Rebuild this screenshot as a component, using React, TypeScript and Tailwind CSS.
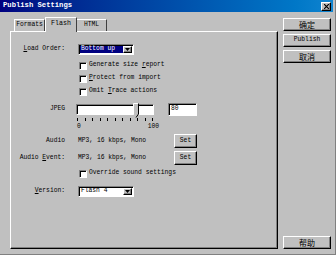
const mono = "font-['Liberation_Mono','DejaVu_Sans_Mono',monospace]";
const cjk = "font-['Noto_Sans_CJK_SC','Noto_Sans',sans-serif]";
const raised =
  "border border-t-white border-l-white border-b-black border-r-black shadow-[inset_-1px_-1px_0_#808080]";
const sunken =
  "border border-t-[#808080] border-l-[#808080] border-b-white border-r-white shadow-[inset_1px_1px_0_#000]";

const U = ({ children }: { children: string }) => <span className="underline underline-offset-[1px]">{children}</span>;

const Select = ({ value, selected }: { value: string; selected?: boolean }) => (
  <div className={`w-[56px] h-[11px] bg-white ${sunken} flex items-stretch p-[1px]`}>
    <span
      className={`flex-1 flex items-center pl-[1px] leading-none ${
        selected ? "bg-[#000080] text-white" : "text-black"
      }`}
    >
      {value}
    </span>
    <span className={`w-[9px] bg-[#c0c0c0] ${raised} flex items-center justify-center`}>
      <svg width="5" height="3" viewBox="0 0 5 3">
        <path d="M0 0H5L2.5 3Z" fill="#000" />
      </svg>
    </span>
  </div>
);

const Check = ({ children }: { children: React.ReactNode }) => (
  <div className="flex items-center h-[13px] ml-[1px]">
    <span className={`w-[8px] h-[8px] bg-white ${sunken}`} />
    <span className="ml-[2px] leading-none">{children}</span>
  </div>
);

const Label = ({ children }: { children: React.ReactNode }) => (
  <span className="w-[54px] shrink-0 text-right leading-none">{children}</span>
);

const WinButton = ({ children, className = "" }: { children: React.ReactNode; className?: string }) => (
  <div className={`h-[13px] bg-[#c0c0c0] ${raised} flex items-center justify-center leading-none ${className}`}>
    {children}
  </div>
);

export default function App() {
  return (
    <div className={`w-[336px] h-[255px] bg-[#c0c0c0] text-black ${mono} text-[6.3px] overflow-hidden border-r border-b border-r-[#808080] border-b-[#808080]`}>
      {/* title bar */}
      <div className="h-[12px] mr-[2px] flex items-center justify-between pl-[3px] pr-[2px] bg-gradient-to-r from-[#000080] to-[#1084d0]">
        <span className="text-white font-bold text-[7.2px] leading-none">Publish Settings</span>
        <span className={`w-[10px] h-[9px] bg-[#c0c0c0] ${raised} flex items-center justify-center`}>
          <svg width="5" height="5" viewBox="0 0 5 5">
            <path d="M0 0L5 5M5 0L0 5" stroke="#000" strokeWidth="1.2" />
          </svg>
        </span>
      </div>

      <div className="flex pt-[5px]">
        {/* left: tabs + panel */}
        <div className="ml-[10px] w-[268px] flex flex-col">
          <div className="h-[14px] flex items-end pl-[4px]">
            <div className="w-[31px] h-[12px] border-t border-l border-white border-r border-r-[#404040] flex items-center justify-center leading-none">
              Formats
            </div>
            <div className="relative z-10 -mb-[1px] w-[32px] h-[15px] bg-[#c0c0c0] border-t border-l border-white border-r border-r-[#404040] flex items-start pt-[3px] justify-center leading-none text-[6.6px]">
              Flash
            </div>
            <div className="w-[30px] h-[12px] border-t border-white border-r border-r-[#404040] flex items-center justify-center leading-none">
              HTML
            </div>
          </div>

          <div className="h-[218px] border border-t-white border-l-white border-r-black border-b-black shadow-[inset_-1px_-1px_0_#808080] flex flex-col">
            {/* load order */}
            <div className="flex items-center h-[11px] mt-[12px]">
              <Label>
                <U>L</U>oad Order:
              </Label>
              <div className="ml-[13px]">
                <Select value="Bottom up" selected />
              </div>
            </div>

            <div className="flex flex-col ml-[67px] mt-[4px]">
              <Check>
                Generate size <U>r</U>eport
              </Check>
              <Check>
                <U>P</U>rotect from import
              </Check>
              <Check>
                Omit <U>T</U>race actions
              </Check>
            </div>

            {/* jpeg slider */}
            <div className="flex items-center h-[13px] mt-[5px]">
              <Label>JPEG</Label>
              <div className={`relative ml-[11px] w-[78px] h-[11px] bg-white ${sunken}`}>
                <svg className="absolute left-[56px] -top-[2px]" width="6" height="15" viewBox="0 0 6 15">
                  <path d="M0.5 0.5H5.5V11L3 14.5L0.5 11Z" fill="#c0c0c0" />
                  <path d="M0.5 11V0.5H5.5" stroke="#fff" fill="none" />
                  <path d="M5.5 0.5V11L3 14.5" stroke="#000" fill="none" />
                </svg>
              </div>
              <div className={`ml-[14px] w-[29px] h-[13px] bg-white ${sunken} flex items-center pl-[2px] leading-none`}>
                80
              </div>
            </div>
            <div className="ml-[66px] mt-[2px] w-[76px] h-[3px] flex justify-between">
              {Array.from({ length: 11 }).map((_, i) => (
                <span key={i} className="w-px h-[3px] bg-black" />
              ))}
            </div>
            <div className="ml-[66px] mt-[3px] w-[82px] h-[7px] flex justify-between items-center leading-none">
              <span>0</span>
              <span>100</span>
            </div>

            {/* audio */}
            <div className="flex items-center h-[14px] mt-[3px]">
              <Label>Audio</Label>
              <span className="ml-[13px] w-[96px] leading-none">MP3, 16 kbps, Mono</span>
              <WinButton className="w-[23px] !h-[14px]">Set</WinButton>
            </div>
            <div className="flex items-center h-[14px] mt-[3px]">
              <Label>
                Audio <U>E</U>vent:
              </Label>
              <span className="ml-[13px] w-[96px] leading-none">MP3, 16 kbps, Mono</span>
              <WinButton className="w-[23px] !h-[14px]">Set</WinButton>
            </div>

            <div className="ml-[67px] mt-[2px]">
              <Check>Override sound settings</Check>
            </div>

            {/* version */}
            <div className="flex items-center h-[11px] mt-[6px]">
              <Label>
                <U>V</U>ersion:
              </Label>
              <div className="ml-[13px]">
                <Select value="Flash 4" />
              </div>
            </div>
          </div>
        </div>

        {/* right: buttons */}
        <div className="ml-[5px] w-[48px] h-[232px] pt-[1px] flex flex-col justify-between">
          <div className="flex flex-col gap-[3px]">
            <WinButton className={`${cjk} text-[8px]`}>确定</WinButton>
            <WinButton>Publish</WinButton>
            <WinButton className={`${cjk} text-[8px]`}>取消</WinButton>
          </div>
          <WinButton className={`${cjk} text-[8px]`}>帮助</WinButton>
        </div>
      </div>
    </div>
  );
}
